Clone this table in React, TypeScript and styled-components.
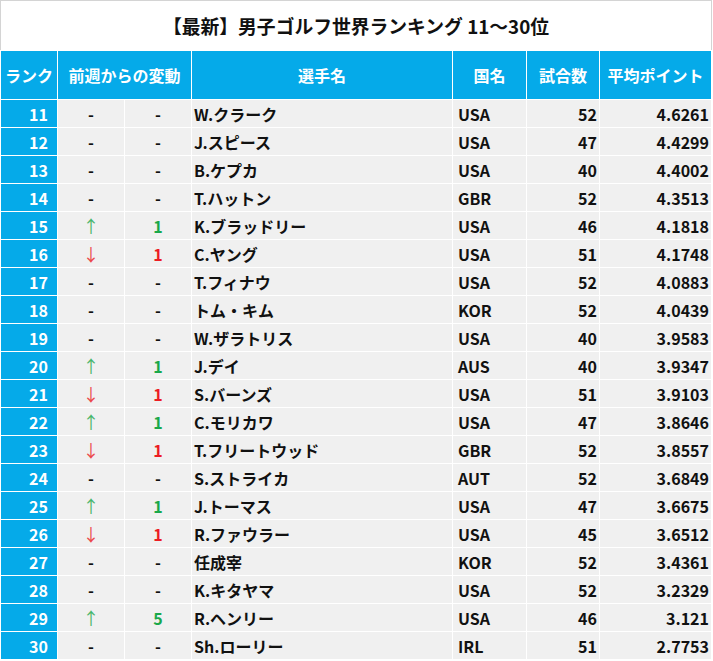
import React from "react";
import styled, { createGlobalStyle } from "styled-components";

const Global = createGlobalStyle`
  html, body { margin: 0; padding: 0; background: #ffffff; }
  body { font-family: "Noto Sans CJK JP", "Noto Sans", sans-serif; }
`;

const BLUE = "#05aae9";
const GRAY = "#f0f0f0";
const GREEN = "#1aa84a";
const RED = "#ec1c24";

const Frame = styled.div`
  width: 713px;
  height: 661px;
  box-sizing: border-box;
  background: #ffffff;
  display: flex;
  flex-direction: column;
`;

const Title = styled.div`
  height: 50px;
  box-sizing: border-box;
  border: 1px solid #d4d4d4;
  border-bottom: none;
  width: 712px;
  display: flex;
  align-items: center;
  justify-content: center;
  font-size: 18.8px;
  font-weight: 700;
  color: #111111;
`;

const Grid = styled.div`
  margin-top: 1px;
  margin-left: 1px;
  width: 710px;
  display: grid;
  grid-template-columns: 56px 66px 66px 260px 73px 72px 111px;
  grid-template-rows: 48px;
  grid-auto-rows: 27px;
  gap: 1px;
  background: #ffffff;
`;

const HeadCell = styled.div<{ $span?: number }>`
  background: ${BLUE};
  color: #ffffff;
  font-size: 16px;
  font-weight: 700;
  display: flex;
  align-items: center;
  justify-content: center;
  grid-column: span ${(p) => p.$span ?? 1};
  white-space: nowrap;
`;

const RankCell = styled.div`
  background: ${BLUE};
  color: #ffffff;
  font-size: 16px;
  font-weight: 700;
  display: flex;
  align-items: center;
  justify-content: flex-end;
  padding-right: 9px;
`;

const Cell = styled.div<{ $align?: "left" | "center" | "right"; $color?: string }>`
  background: ${GRAY};
  color: ${(p) => p.$color ?? "#111111"};
  font-size: 16px;
  font-weight: 700;
  display: flex;
  align-items: center;
  justify-content: ${(p) =>
    p.$align === "right" ? "flex-end" : p.$align === "center" ? "center" : "flex-start"};
  padding: ${(p) => (p.$align === "right" ? "0 2px 0 0" : p.$align === "left" ? "0 0 0 2px" : "0")};
  white-space: nowrap;
`;

const CountryCell = styled(Cell)`
  padding-left: 5px;
`;

const Arrow = styled.span<{ $color: string }>`
  color: ${(p) => p.$color};
  font-weight: 400;
  font-size: 17px;
  opacity: 0.8;
`;

type Row = {
  rank: number;
  move: "up" | "down" | null;
  diff: string;
  name: string;
  country: string;
  games: number;
  points: string;
};

const rows: Row[] = [
  { rank: 11, move: null, diff: "-", name: "W.クラーク", country: "USA", games: 52, points: "4.6261" },
  { rank: 12, move: null, diff: "-", name: "J.スピース", country: "USA", games: 47, points: "4.4299" },
  { rank: 13, move: null, diff: "-", name: "B.ケプカ", country: "USA", games: 40, points: "4.4002" },
  { rank: 14, move: null, diff: "-", name: "T.ハットン", country: "GBR", games: 52, points: "4.3513" },
  { rank: 15, move: "up", diff: "1", name: "K.ブラッドリー", country: "USA", games: 46, points: "4.1818" },
  { rank: 16, move: "down", diff: "1", name: "C.ヤング", country: "USA", games: 51, points: "4.1748" },
  { rank: 17, move: null, diff: "-", name: "T.フィナウ", country: "USA", games: 52, points: "4.0883" },
  { rank: 18, move: null, diff: "-", name: "トム・キム", country: "KOR", games: 52, points: "4.0439" },
  { rank: 19, move: null, diff: "-", name: "W.ザラトリス", country: "USA", games: 40, points: "3.9583" },
  { rank: 20, move: "up", diff: "1", name: "J.デイ", country: "AUS", games: 40, points: "3.9347" },
  { rank: 21, move: "down", diff: "1", name: "S.バーンズ", country: "USA", games: 51, points: "3.9103" },
  { rank: 22, move: "up", diff: "1", name: "C.モリカワ", country: "USA", games: 47, points: "3.8646" },
  { rank: 23, move: "down", diff: "1", name: "T.フリートウッド", country: "GBR", games: 52, points: "3.8557" },
  { rank: 24, move: null, diff: "-", name: "S.ストライカ", country: "AUT", games: 52, points: "3.6849" },
  { rank: 25, move: "up", diff: "1", name: "J.トーマス", country: "USA", games: 47, points: "3.6675" },
  { rank: 26, move: "down", diff: "1", name: "R.ファウラー", country: "USA", games: 45, points: "3.6512" },
  { rank: 27, move: null, diff: "-", name: "任成宰", country: "KOR", games: 52, points: "3.4361" },
  { rank: 28, move: null, diff: "-", name: "K.キタヤマ", country: "USA", games: 52, points: "3.2329" },
  { rank: 29, move: "up", diff: "5", name: "R.ヘンリー", country: "USA", games: 46, points: "3.121" },
  { rank: 30, move: null, diff: "-", name: "Sh.ローリー", country: "IRL", games: 51, points: "2.7753" },
];

export default function App() {
  return (
    <Frame>
      <Global />
      <Title>【最新】男子ゴルフ世界ランキング 11～30位</Title>
      <Grid>
        <HeadCell>ランク</HeadCell>
        <HeadCell $span={2}>前週からの変動</HeadCell>
        <HeadCell>選手名</HeadCell>
        <HeadCell>国名</HeadCell>
        <HeadCell>試合数</HeadCell>
        <HeadCell>平均ポイント</HeadCell>
        {rows.map((r) => {
          const color = r.move === "up" ? GREEN : r.move === "down" ? RED : undefined;
          return (
            <React.Fragment key={r.rank}>
              <RankCell>{r.rank}</RankCell>
              <Cell $align="center">
                {r.move ? <Arrow $color={color!}>{r.move === "up" ? "↑" : "↓"}</Arrow> : "-"}
              </Cell>
              <Cell $align="center" $color={color}>{r.diff}</Cell>
              <Cell $align="left">{r.name}</Cell>
              <CountryCell $align="left">{r.country}</CountryCell>
              <Cell $align="right">{r.games}</Cell>
              <Cell $align="right">{r.points}</Cell>
            </React.Fragment>
          );
        })}
      </Grid>
    </Frame>
  );
}
